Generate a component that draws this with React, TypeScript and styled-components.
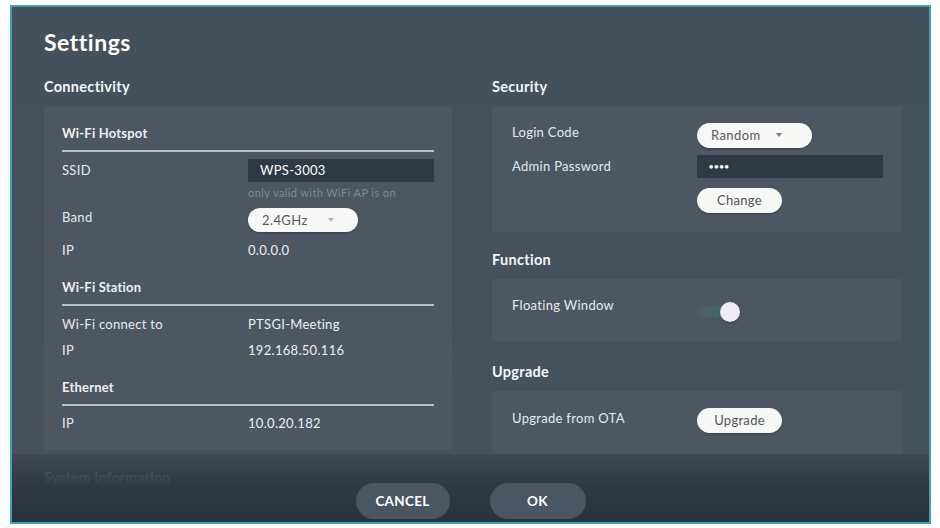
import styled, { createGlobalStyle } from "styled-components";

const GlobalStyle = createGlobalStyle`
  html, body {
    margin: 0;
    background: #ffffff;
  }
  body {
    font-family: Lato, "Noto Sans", sans-serif;
  }
`;

const Page = styled.div`
  width: 940px;
  height: 528px;
  padding: 5px 9px 4px 10px;
  box-sizing: border-box;
`;

const Frame = styled.div`
  position: relative;
  height: 100%;
  box-sizing: border-box;
  border: 2px solid #3fa2ba;
  background: linear-gradient(180deg, #44505a 0%, #45515c 60%, #46525d 100%);
  padding: 21px 26px 0 32px;
  overflow: hidden;
  color: #e9ecef;
`;

const Title = styled.h1`
  margin: 0;
  font-size: 23px;
  line-height: 28px;
  letter-spacing: 0.5px;
  font-weight: 700;
  color: #ffffff;
`;

const Columns = styled.div`
  display: grid;
  grid-template-columns: 408px 410px;
  column-gap: 40px;
  margin-top: 22px;
`;

const Column = styled.div`
  display: flex;
  flex-direction: column;
`;

const SectionTitle = styled.h2<{ $top?: number }>`
  margin: ${(p) => p.$top ?? 0}px 0 10px;
  font-size: 14.5px;
  line-height: 18px;
  letter-spacing: 0.3px;
  font-weight: 700;
  color: #f4f6f8;
`;

const Card = styled.div<{ $pad: string }>`
  background: #4c5762;
  display: flex;
  flex-direction: column;
  padding: ${(p) => p.$pad};
`;

const GroupTitle = styled.div<{ $top?: number }>`
  margin-top: ${(p) => p.$top ?? 0}px;
  font-size: 13px;
  line-height: 18px;
  letter-spacing: 0.2px;
  font-weight: 700;
  color: #eef0f2;
  padding-bottom: 8px;
  border-bottom: 2px solid #b9c1c8;
`;

const Row = styled.div<{ $top?: number; $label?: number }>`
  display: grid;
  grid-template-columns: ${(p) => p.$label ?? 186}px 1fr;
  align-items: center;
  height: 26px;
  margin-top: ${(p) => p.$top ?? 0}px;
  font-size: 13px;
  letter-spacing: 0.3px;
`;

const Label = styled.span<{ $lift?: number }>`
  color: #e6e9ec;
  position: relative;
  top: ${(p) => -(p.$lift ?? 0)}px;
`;

const Value = styled.span`
  color: #eef0f2;
`;

const Hint = styled.div`
  margin: 3px 0 0 186px;
  font-size: 11px;
  line-height: 14px;
  letter-spacing: 0.4px;
  color: #7f8a93;
`;

const TextInput = styled.div<{ $width: number }>`
  width: ${(p) => p.$width}px;
  height: 23px;
  box-sizing: border-box;
  background: #2f3a45;
  color: #ffffff;
  font-size: 13px;
  display: flex;
  align-items: center;
  padding-left: 12px;
`;

const Dots = styled.span`
  font-size: 7px;
  letter-spacing: 1px;
  font-weight: 700;
`;

const Pill = styled.button<{ $width: number; $height?: number }>`
  width: ${(p) => p.$width}px;
  height: ${(p) => p.$height ?? 25}px;
  border: none;
  border-radius: 13px;
  background: #f7f7f5;
  color: #555a60;
  font-family: inherit;
  font-size: 13px;
  letter-spacing: 0.4px;
  padding: 0 0 0 14px;
  display: flex;
  align-items: center;
  box-shadow: 0 1px 2px rgba(0, 0, 0, 0.25);
`;

const PillText = styled.span<{ $w: number }>`
  width: ${(p) => p.$w}px;
  text-align: left;
`;

const Arrow = styled.span<{ $color: string }>`
  width: 0;
  height: 0;
  border-left: 3.5px solid transparent;
  border-right: 3.5px solid transparent;
  border-top: 4px solid ${(p) => p.$color};
`;

const SmallButton = styled.button`
  width: 85px;
  height: 25px;
  border: none;
  border-radius: 13px;
  background: #f7f7f5;
  color: #50565c;
  font-family: inherit;
  font-size: 13px;
  letter-spacing: 0.3px;
  box-shadow: 0 1px 2px rgba(0, 0, 0, 0.25);
`;

const Toggle = styled.div`
  position: relative;
  width: 38px;
  height: 10px;
  margin-top: 8px;
  border-radius: 5px;
  background: linear-gradient(90deg, rgba(60, 150, 100, 0.05), rgba(50, 150, 100, 0.5));
`;

const Knob = styled.span`
  position: absolute;
  right: -5px;
  top: -5px;
  width: 20px;
  height: 20px;
  border-radius: 50%;
  background: #efedf3;
  box-shadow: 0 1px 2px rgba(0, 0, 0, 0.3);
`;

const Hidden = styled.div`
  margin-top: 19px;
  font-size: 14.5px;
  line-height: 18px;
  font-weight: 700;
  color: #eef0f2;
  opacity: 0.6;
`;

const Footer = styled.div`
  position: absolute;
  left: 0;
  right: 0;
  bottom: 0;
  height: 68px;
  display: flex;
  justify-content: center;
  align-items: flex-end;
  gap: 40px;
  padding-bottom: 3px;
  box-sizing: border-box;
  background: linear-gradient(
    180deg,
    rgba(58, 69, 80, 0.55) 0%,
    rgba(47, 58, 69, 0.85) 30%,
    #2d3843 55%,
    #29333d 100%
  );
`;

const FooterButton = styled.button<{ $width: number }>`
  width: ${(p) => p.$width}px;
  height: 36px;
  border: none;
  border-radius: 18px;
  background: #4a5664;
  color: #ffffff;
  font-family: inherit;
  font-size: 13.5px;
  letter-spacing: 0.3px;
  font-weight: 700;
`;

export default function App() {
  return (
    <Page>
      <GlobalStyle />
      <Frame>
        <Title>Settings</Title>
        <Columns>
          <Column>
            <SectionTitle>Connectivity</SectionTitle>
            <Card $pad="18px 18px 14px">
              <GroupTitle>Wi-Fi Hotspot</GroupTitle>
              <Row $top={5}>
                <Label>SSID</Label>
                <TextInput $width={186}>WPS-3003</TextInput>
              </Row>
              <Hint>only valid with WiFi AP is on</Hint>
              <Row $top={7}>
                <Label $lift={3}>Band</Label>
                <Pill $width={110} $height={24}>
                  <PillText $w={66}>2.4GHz</PillText>
                  <Arrow $color="#b4b8bc" />
                </Pill>
              </Row>
              <Row $top={4}>
                <Label>IP</Label>
                <Value>0.0.0.0</Value>
              </Row>
              <GroupTitle $top={15}>Wi-Fi Station</GroupTitle>
              <Row $top={5}>
                <Label>Wi-Fi connect to</Label>
                <Value>PTSGI-Meeting</Value>
              </Row>
              <Row>
                <Label>IP</Label>
                <Value>192.168.50.116</Value>
              </Row>
              <GroupTitle $top={15}>Ethernet</GroupTitle>
              <Row $top={4}>
                <Label>IP</Label>
                <Value>10.0.20.182</Value>
              </Row>
            </Card>
            <Hidden>System Information</Hidden>
          </Column>
          <Column>
            <SectionTitle>Security</SectionTitle>
            <Card $pad="16px 20px 19px">
              <Row $label={185}>
                <Label $lift={3}>Login Code</Label>
                <Pill $width={115}>
                  <PillText $w={65}>Random</PillText>
                  <Arrow $color="#7c8086" />
                </Pill>
              </Row>
              <Row $top={5} $label={185}>
                <Label>Admin Password</Label>
                <TextInput $width={186}>
                  <Dots>●●●●</Dots>
                </TextInput>
              </Row>
              <Row $top={8} $label={185}>
                <span />
                <SmallButton>Change</SmallButton>
              </Row>
            </Card>
            <SectionTitle $top={19}>Function</SectionTitle>
            <Card $pad="16px 20px 20px">
              <Row $label={185}>
                <Label $lift={3}>Floating Window</Label>
                <Toggle>
                  <Knob />
                </Toggle>
              </Row>
            </Card>
            <SectionTitle $top={22}>Upgrade</SectionTitle>
            <Card $pad="16px 20px 21px">
              <Row $label={185}>
                <Label $lift={2}>Upgrade from OTA</Label>
                <SmallButton>Upgrade</SmallButton>
              </Row>
            </Card>
          </Column>
        </Columns>
        <Footer>
          <FooterButton $width={94}>CANCEL</FooterButton>
          <FooterButton $width={96}>OK</FooterButton>
        </Footer>
      </Frame>
    </Page>
  );
}
